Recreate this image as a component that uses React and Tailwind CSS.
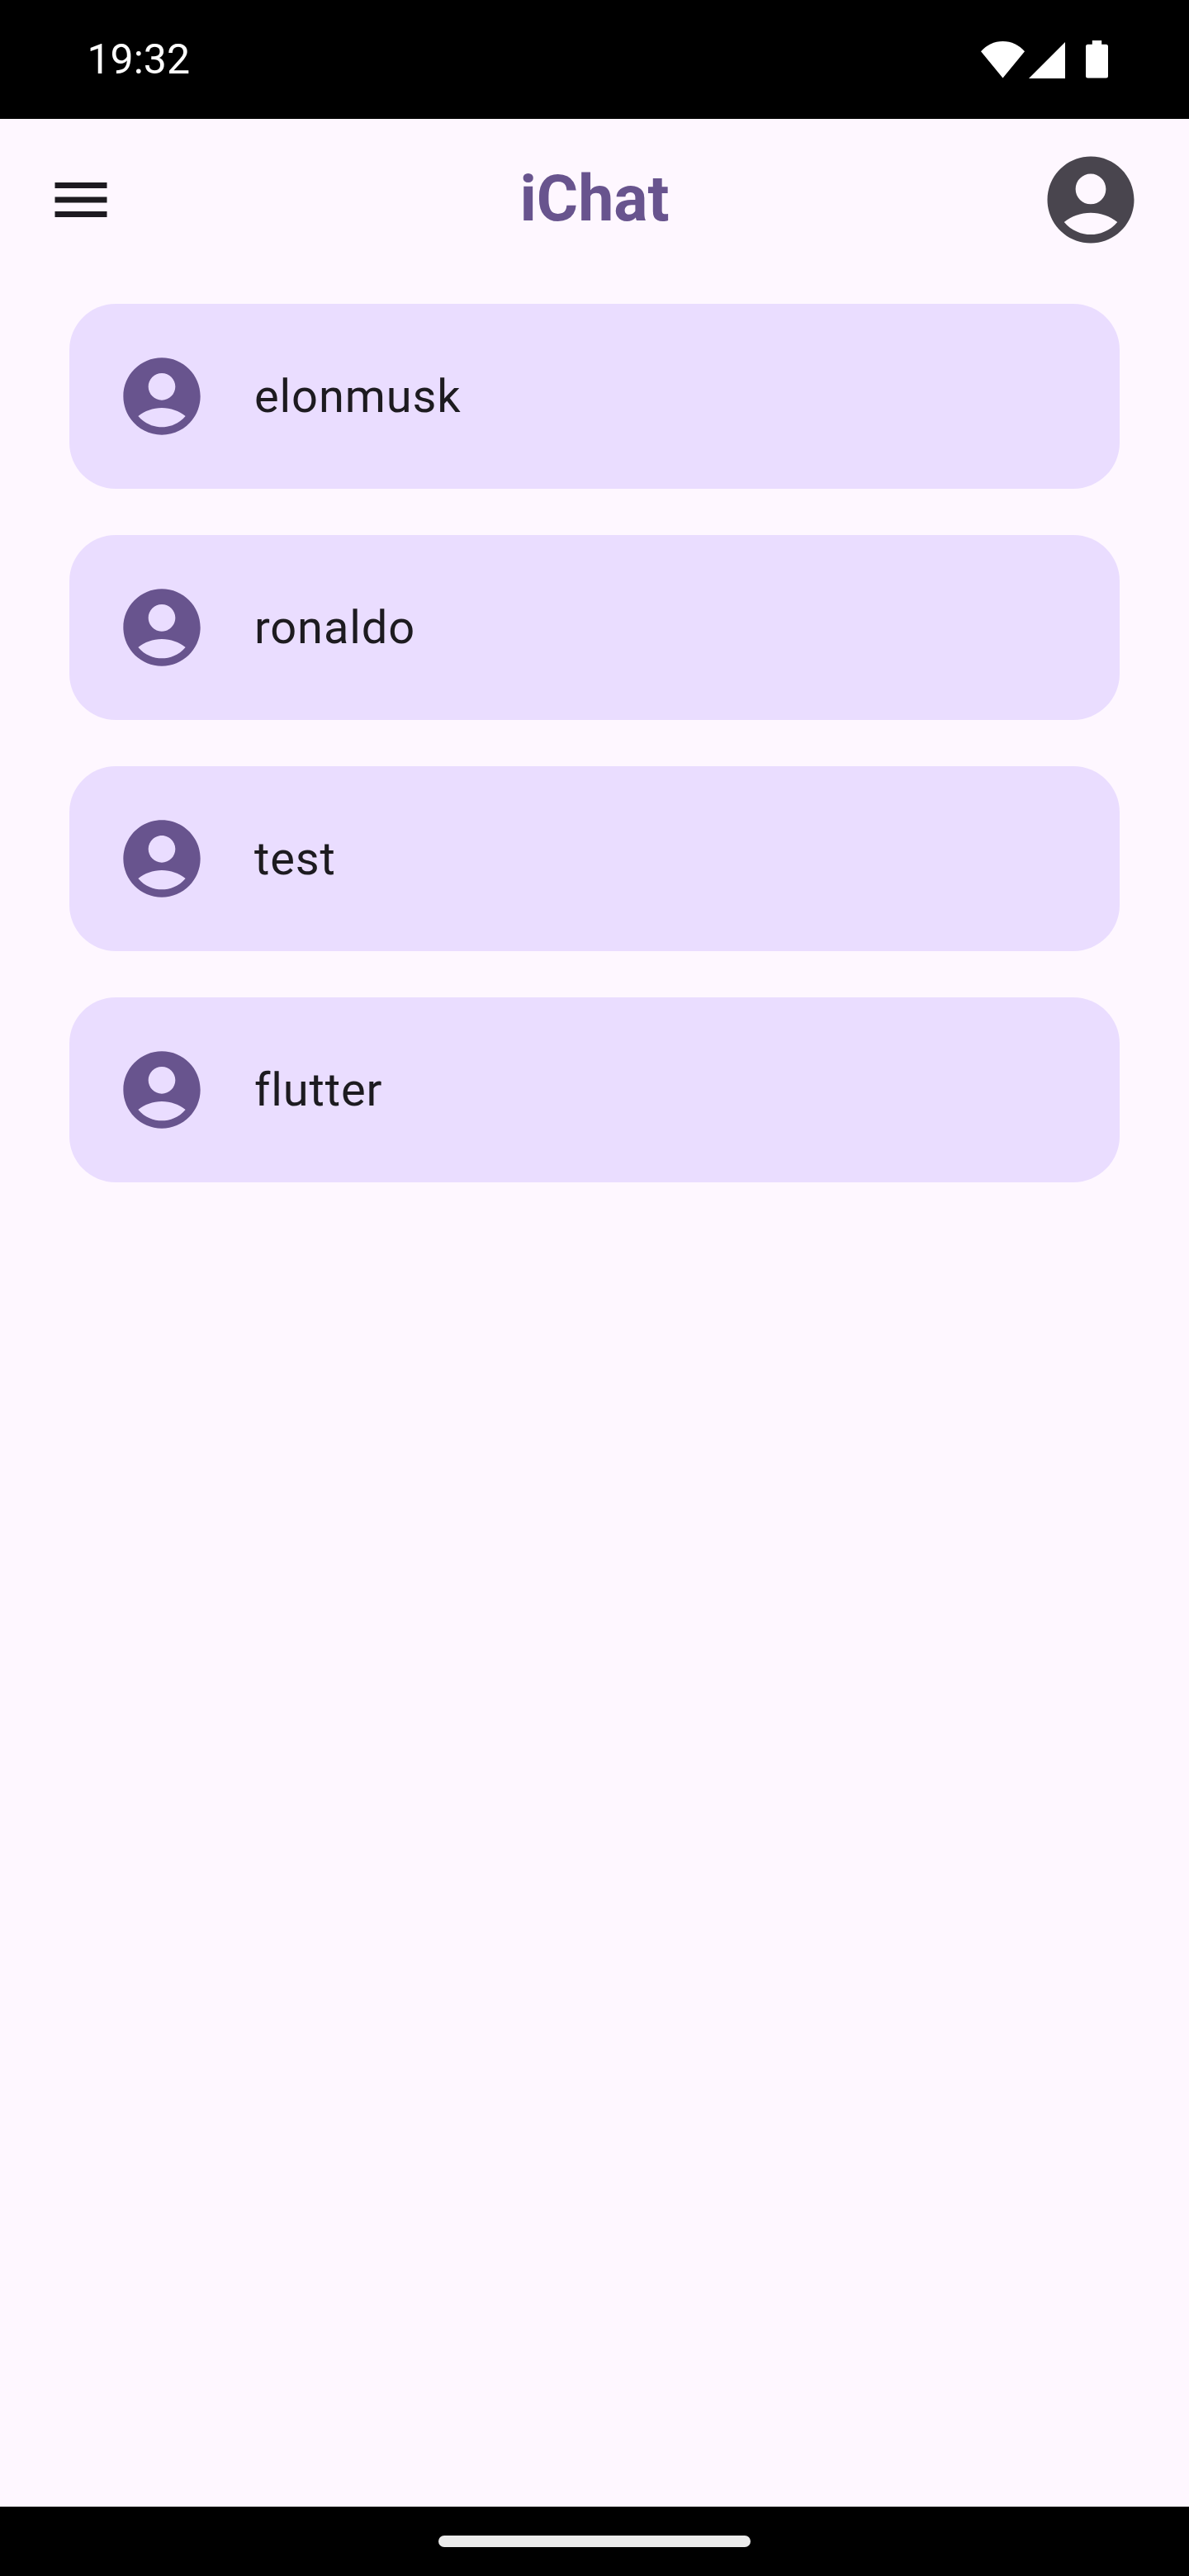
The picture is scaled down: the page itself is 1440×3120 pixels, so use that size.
const chats = ["elonmusk", "ronaldo", "test", "flutter"];

function AccountIcon({ className }) {
  return (
    <svg viewBox="0 0 24 24" fill="currentColor" className={className}>
      <path d="M12 2C6.48 2 2 6.48 2 12s4.48 10 10 10 10-4.48 10-10S17.52 2 12 2zm0 4c1.93 0 3.5 1.57 3.5 3.5S13.93 13 12 13s-3.5-1.57-3.5-3.5S10.07 6 12 6zm0 14c-2.03 0-4.43-.82-6.14-2.88C7.55 15.8 9.68 15 12 15s4.45.8 6.14 2.12C16.43 19.18 14.03 20 12 20z" />
    </svg>
  );
}

function StatusBar() {
  return (
    <div className="flex h-36 items-center justify-between bg-black pr-[98px] pl-[105.5px] text-white">
      <span className="text-[50px] leading-[58px]">19:32</span>
      <div className="flex h-[45px] items-end">
        <svg viewBox="0 0 53 44.5" fill="currentColor" className="h-[44.5px] w-[53px]">
          <path d="M0 12.300C7 4.500 16 0 26.500 0S46 4.500 53 12.300L26.500 44.500z" />
        </svg>
        <svg viewBox="0 0 44 44" fill="currentColor" className="ml-[5px] h-[44px] w-[44px]">
          <path d="M0 44H44V0z" />
        </svg>
        <svg viewBox="0 0 27 45.500" fill="currentColor" className="ml-[25px] h-[45.5px] w-[27px]">
          <path d="M7.800 0H19.200V4.800H24.500A2.500 2.500 0 0 1 27 7.300V43A2.500 2.500 0 0 1 24.500 45.500H2.500A2.500 2.500 0 0 1 0 43V7.300A2.500 2.500 0 0 1 2.500 4.800H7.800z" />
        </svg>
      </div>
    </div>
  );
}

function AppBar() {
  return (
    <header className="grid h-[196px] grid-cols-[1fr_auto_1fr] items-center px-14">
      <svg viewBox="0 0 24 24" fill="currentColor" className="size-[84px]">
        <path d="M3 18h18v-2H3v2zm0-5h18v-2H3v2zm0-7v2h18V6H3z" />
      </svg>
      <h1 className="pb-[2px] text-[77px] leading-[98px] font-bold text-[#68548e]">iChat</h1>
      <AccountIcon className="size-[126px] justify-self-end text-[#49454e]" />
    </header>
  );
}

export default function App() {
  return (
    <div className="flex h-[3120px] w-[1440px] flex-col bg-[#fef7ff] font-['Roboto',sans-serif] text-[#1d1b20]">
      <StatusBar />
      <AppBar />
      <main className="flex grow flex-col gap-14 px-[84px] pt-7">
        {chats.map((name) => (
          <div key={name} className="flex h-56 items-center gap-14 rounded-[56px] bg-[#eaddff] px-14">
            <AccountIcon className="size-28 text-[#68548e]" />
            <span className="text-[56px] leading-[84px] tracking-[0.875px]">{name}</span>
          </div>
        ))}
      </main>
      <div className="flex h-[84px] items-center justify-center bg-black">
        <div className="h-[14px] w-[378px] rounded-full bg-[#ebebeb]" />
      </div>
    </div>
  );
}
